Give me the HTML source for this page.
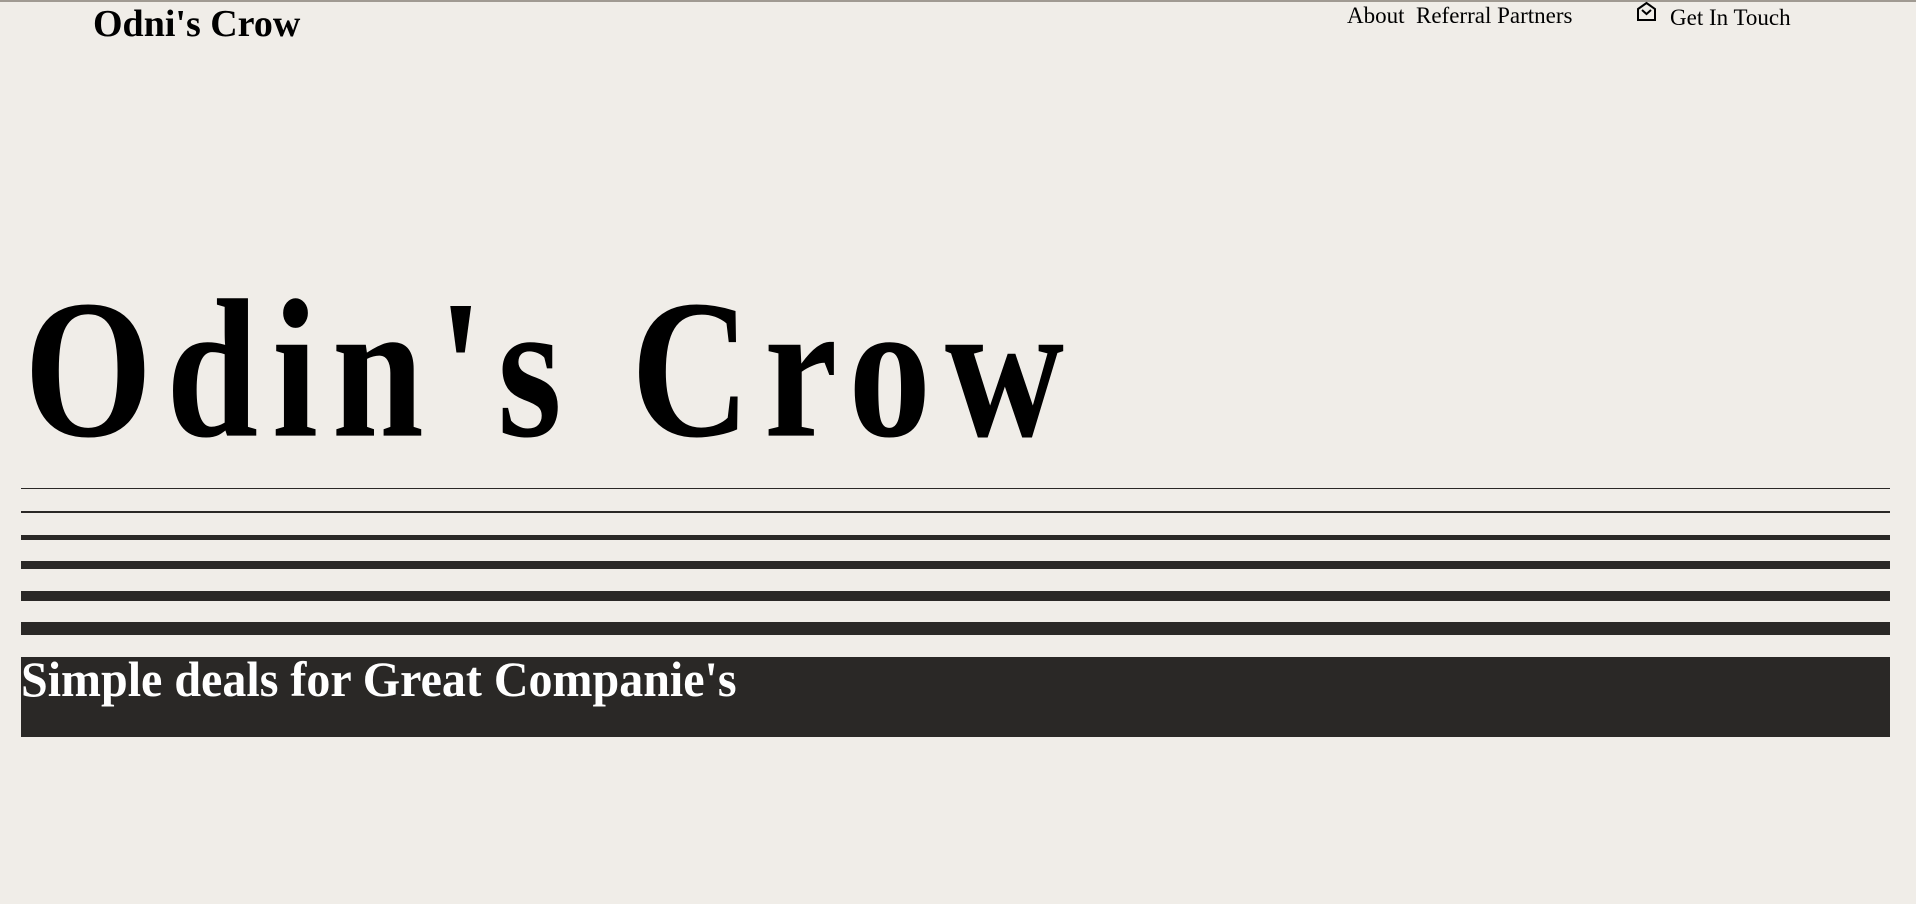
<!DOCTYPE html>
<html><head><style>
html,body{margin:0;padding:0;}
body{width:1916px;height:904px;background:#f0ede8;position:relative;overflow:hidden;font-family:"Liberation Serif",serif;color:#000;}
.a{position:absolute;white-space:nowrap;line-height:1;}
.l{position:absolute;left:21px;width:1869px;background:#2a2826;}
</style></head><body>
<div style="position:absolute;left:0;top:0;width:1916px;height:2px;background:#a09a92"></div>
<div class="a" style="left:93px;top:5px;font-size:38px;font-weight:bold;">Odni's Crow</div>
<div class="a" style="left:1347px;top:4px;font-size:23px;">About&nbsp; Referral Partners</div>
<svg style="position:absolute;left:1636px;top:1px" width="21" height="21" viewBox="0 0 21 21"><path d="M2 8 L10.5 2 L19 8 V19 H2 Z" fill="none" stroke="#000" stroke-width="2"/><path d="M6 9 L10.5 13 L15 9" fill="none" stroke="#000" stroke-width="2"/></svg>
<div class="a" style="left:1670px;top:6px;font-size:23px;">Get In Touch</div>
<div class="a" style="left:24px;top:270px;font-size:165px;font-weight:bold;letter-spacing:14px;transform:scaleY(1.2);transform-origin:0 0;">Odin's Crow</div>
<div class="l" style="top:488px;height:1px"></div>
<div class="l" style="top:511px;height:2px"></div>
<div class="l" style="top:535px;height:5px"></div>
<div class="l" style="top:561px;height:8px"></div>
<div class="l" style="top:591px;height:10px"></div>
<div class="l" style="top:622px;height:13px"></div>
<div class="l" style="top:657px;height:80px"></div>
<div class="a" style="left:21px;top:654px;font-size:50px;font-weight:bold;color:#fff;transform:scaleX(0.96);transform-origin:0 0;">Simple deals for Great Companie's</div>
</body></html>
